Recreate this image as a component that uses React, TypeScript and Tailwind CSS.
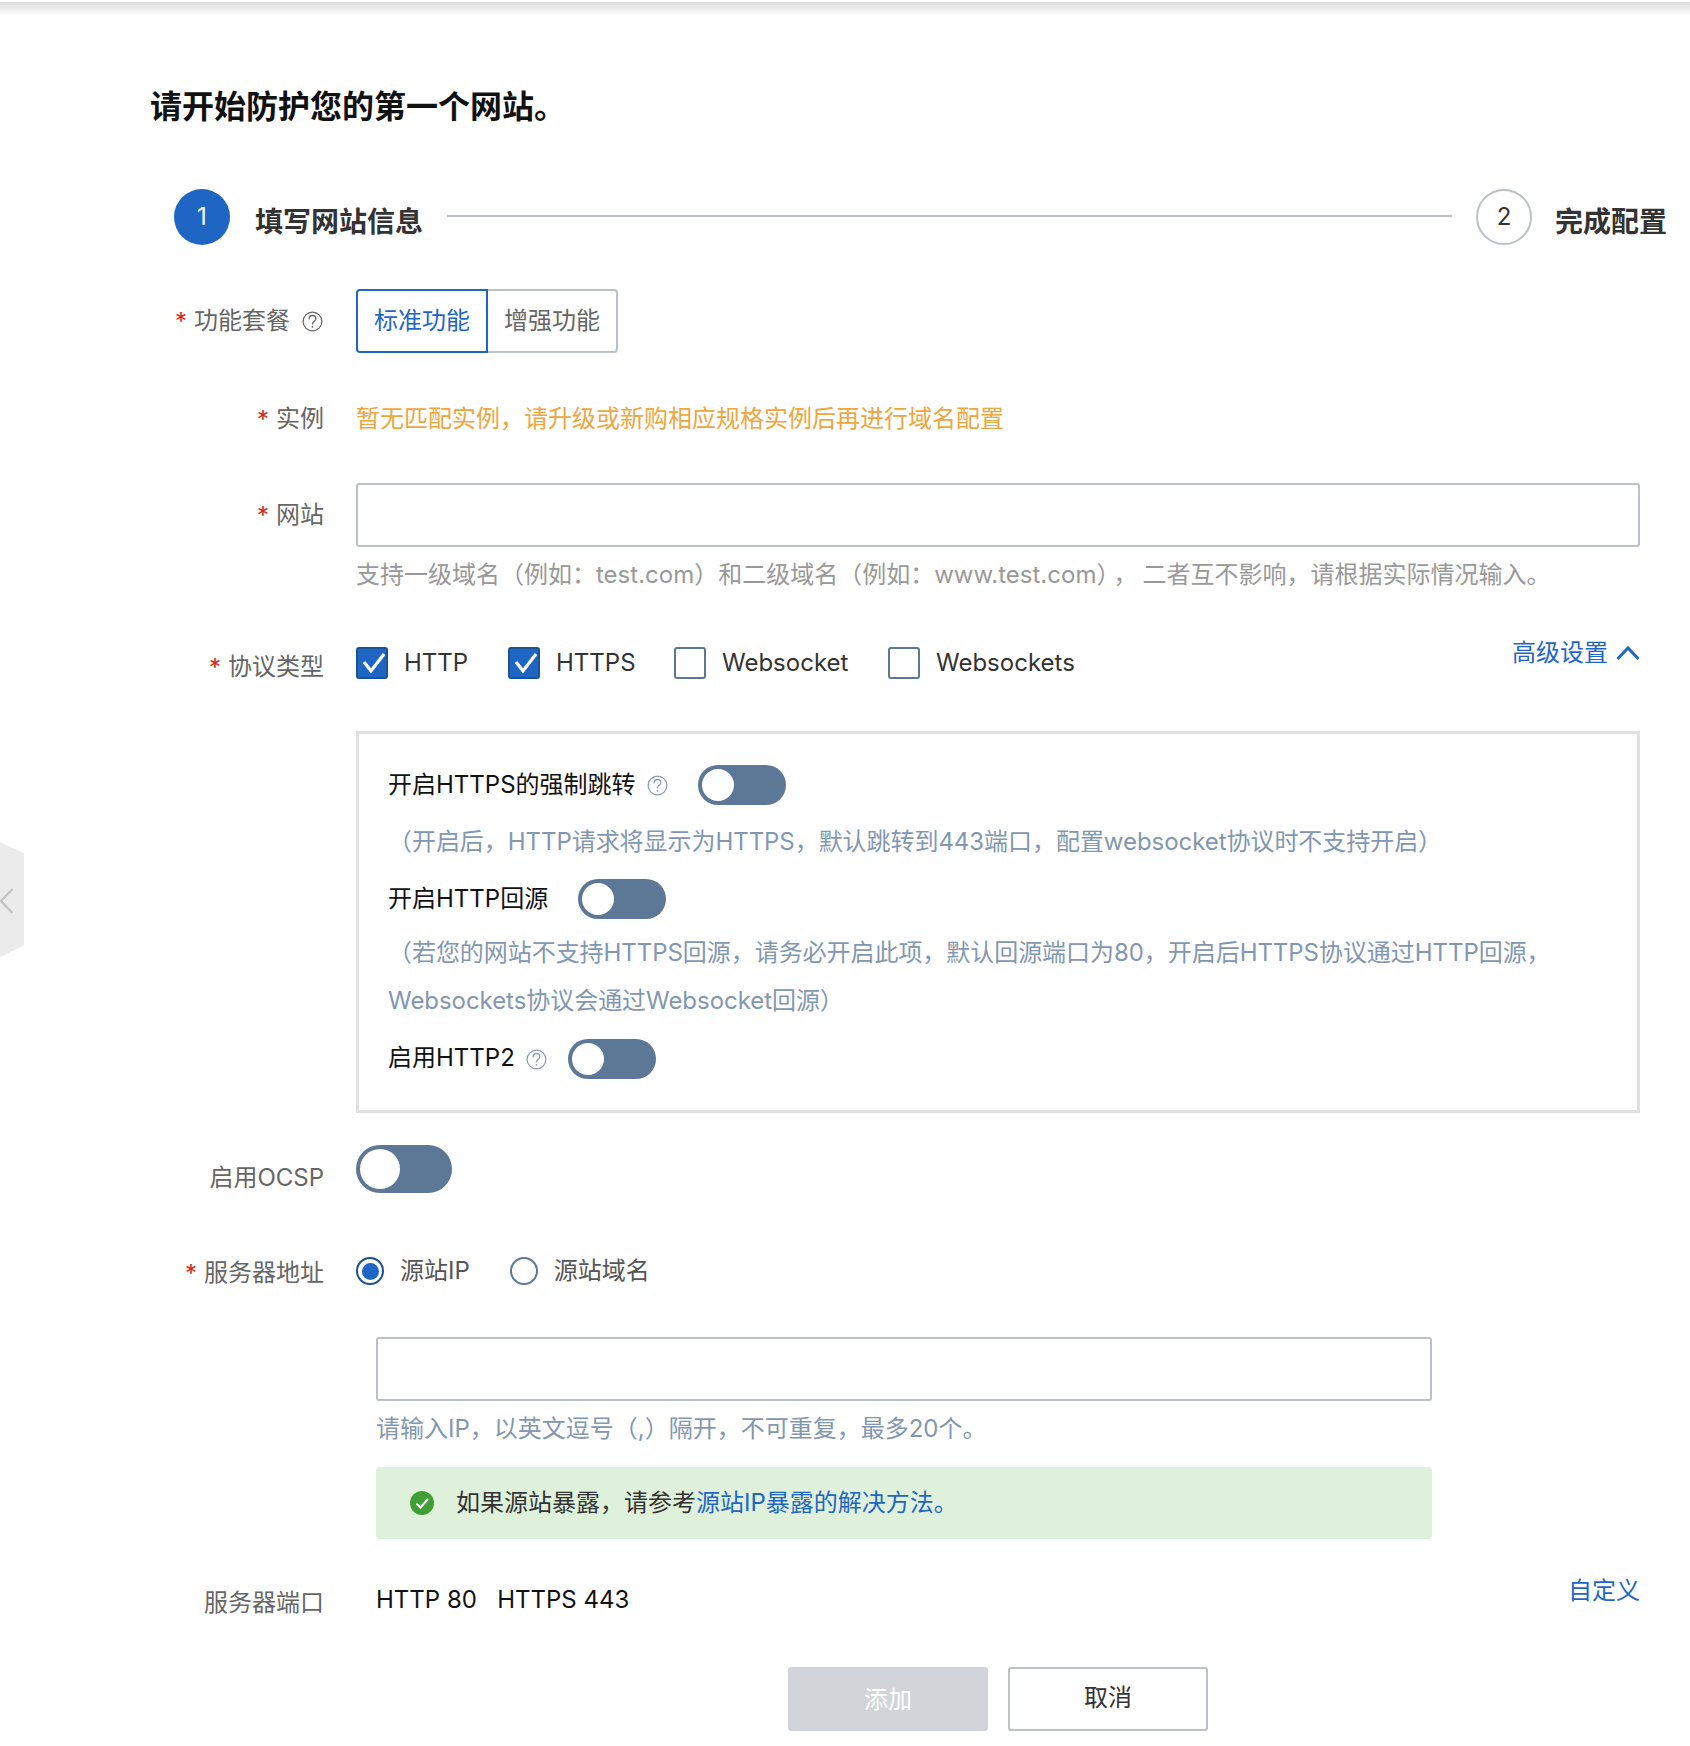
import React from "react";

const FONT = "font-['Inter','Noto_Sans_CJK_SC',sans-serif]";

function Help({ className }: { className: string }) {
  return (
    <svg className={className} viewBox="0 0 22 22" fill="none">
      <circle cx="11" cy="11" r="9.8" stroke="currentColor" strokeWidth="1.3" />
      <path d="M7.5 8.2c0-2 1.5-3.5 3.5-3.5s3.5 1.4 3.5 3.3c0 2.7-3.5 2.6-3.5 5.4" stroke="currentColor" strokeWidth="1.4" strokeLinecap="round" />
      <circle cx="11" cy="16.6" r="1" fill="currentColor" />
    </svg>
  );
}

function Toggle({ big }: { big?: boolean }) {
  return big ? (
    <div className="flex h-[48px] w-[96px] items-center rounded-full bg-[#5d7896] pl-[4px]">
      <div className="h-[40px] w-[40px] rounded-full bg-white" />
    </div>
  ) : (
    <div className="flex h-[40px] w-[88px] shrink-0 items-center rounded-full bg-[#5d7896] pl-[4px]">
      <div className="h-[32px] w-[32px] rounded-full bg-white" />
    </div>
  );
}

function Label({ text, req, help, className = "" }: { text: string; req?: boolean; help?: boolean; className?: string }) {
  return (
    <div className={`flex w-[324px] shrink-0 items-center justify-end text-[24px] leading-[32px] text-[#666666] ${className}`}>
      {req && <span className="mr-[7px] mt-[2px] text-[#d0281c]">*</span>}
      <span>{text}</span>
      {help && <Help className="ml-[12px] mr-[1px] h-[21px] w-[21px] text-[#666666]" />}
    </div>
  );
}

function Check({ label, on, w }: { label: string; on?: boolean; w: string }) {
  return (
    <div className={`flex items-center ${w}`}>
      {on ? (
        <div className="flex h-[32px] w-[32px] items-center justify-center rounded-[3px] border-2 border-[#1a5296] bg-[#1f66c4]">
          <svg viewBox="0 0 28 28" className="h-[28px] w-[28px]" fill="none">
            <path d="M6 13l7 9L26 5" stroke="white" strokeWidth="3.2" />
          </svg>
        </div>
      ) : (
        <div className="h-[32px] w-[32px] rounded-[3px] border-2 border-[#5d7896] bg-white" />
      )}
      <span className="ml-[16px] text-[24px] leading-[32px] text-[#333333]">{label}</span>
    </div>
  );
}

export default function App() {
  return (
    <div className={`relative h-[1746px] w-full overflow-hidden bg-white ${FONT}`}>
      <div className="mt-[2px] h-[14px] bg-gradient-to-b from-[#dcdcdc] to-white" />
      <div className="absolute left-0 top-[842px] h-[115px] w-[24px] bg-[#ebebeb] [clip-path:polygon(0_0,100%_10%,100%_90%,0_100%)]">
        <svg viewBox="0 0 14 26" className="mt-[46px] h-[26px] w-[14px]" fill="none">
          <path d="M12.5 1L1 13l11.5 12" stroke="#c4c4c4" strokeWidth="2.4" />
        </svg>
      </div>

      <h1 className="ml-[150px] mt-[69px] text-[32px] font-semibold leading-[44px] text-[#111111]">请开始防护您的第一个网站。</h1>

      <div className="ml-[174px] mr-[23px] mt-[60px] flex h-[56px] items-center">
        <div className="flex h-[56px] w-[56px] items-center justify-center rounded-full bg-[#1f66c4] text-[24px] text-white">1</div>
        <span className="ml-[25px] mt-[10px] text-[28px] font-semibold leading-[40px] text-[#333333]">填写网站信息</span>
        <div className="mx-[24px] mb-[2px] h-[2px] flex-1 bg-[#bcc1c8]" />
        <div className="flex h-[56px] w-[56px] items-center justify-center rounded-full border-2 border-[#bcc1c8] text-[24px] text-[#333333]">2</div>
        <span className="ml-[23px] mt-[10px] text-[28px] font-semibold leading-[40px] text-[#333333]">完成配置</span>
      </div>

      <div className="mt-[44px] flex h-[64px] items-center">
        <Label text="功能套餐" req help />
        <div className="ml-[32px] flex h-[64px]">
          <div className="flex w-[132px] items-center justify-center rounded-l-[4px] border-2 border-[#1f66c4] text-[24px] text-[#1f66c4]">标准功能</div>
          <div className="flex w-[130px] items-center justify-center rounded-r-[4px] border-2 border-l-0 border-[#bcc1c8] text-[24px] text-[#666666]">增强功能</div>
        </div>
      </div>

      <div className="mt-[50px] flex h-[32px] items-center">
        <Label text="实例" req />
        <span className="ml-[32px] text-[24px] leading-[32px] text-[#eea63e]">暂无匹配实例，请升级或新购相应规格实例后再进行域名配置</span>
      </div>

      <div className="mt-[48px] flex h-[64px] items-center">
        <Label text="网站" req />
        <div className="ml-[32px] h-[64px] w-[1284px] rounded-[3px] border-2 border-[#bcc1c8]" />
      </div>
      <div className="ml-[356px] mt-[12px] whitespace-pre text-[24px] leading-[32px] text-[#999999]">支持一级域名（例如：test.com）和二级域名（例如：www.test.com）<span className="ml-[5px] mr-[5px]">，</span>二者互不影响，请根据实际情况输入。</div>

      <div className="mr-[50px] mt-[45px] flex h-[48px] items-start">
        <Label text="协议类型" req className="mt-[14px]" />
        <div className="ml-[32px] mt-[11px] flex">
          <Check label="HTTP" on w="w-[152px]" />
          <Check label="HTTPS" on w="w-[166px]" />
          <Check label="Websocket" w="w-[214px]" />
          <Check label="Websockets" w="w-[220px]" />
        </div>
        <div className="ml-auto mt-[1px] flex items-center text-[24px] leading-[32px] text-[#1f66c4]">
          高级设置
          <svg viewBox="0 0 24 14" className="ml-[8px] h-[14px] w-[24px]" fill="none">
            <path d="M1.5 13L12 2l10.5 11" stroke="#1f66c4" strokeWidth="3" />
          </svg>
        </div>
      </div>

      <div className="ml-[356px] mt-[47px] flex h-[382px] w-[1284px] flex-col border-[3px] border-[#e0e0e0] pl-[29px] pt-[31px] text-[24px] leading-[32px]">
        <div className="flex h-[40px] items-center text-[#111111]">
          开启HTTPS的强制跳转
          <Help className="ml-[11px] h-[21px] w-[21px] text-[#8a9db5]" />
          <div className="ml-[30px]"><Toggle /></div>
        </div>
        <div className="mt-[21px] tracking-[-0.05px] text-[#8297b0]">（开启后，HTTP请求将显示为HTTPS，默认跳转到443端口，配置websocket协议时不支持开启）</div>
        <div className="mt-[21px] flex h-[40px] items-center text-[#111111]">
          开启HTTP回源
          <div className="ml-[30px]"><Toggle /></div>
        </div>
        <div className="mt-[10px] pr-[60px] leading-[48px] tracking-[-0.05px] text-[#8297b0]">（若您的网站不支持HTTPS回源，请务必开启此项，默认回源端口为80，开启后HTTPS协议通过HTTP回源，Websockets协议会通过Websocket回源）</div>
        <div className="mt-[14px] flex h-[40px] items-center text-[#111111]">
          <span className="mb-[2px]">启用HTTP2</span>
          <Help className="ml-[11px] h-[21px] w-[21px] text-[#8a9db5]" />
          <div className="ml-[21px]"><Toggle /></div>
        </div>
      </div>

      <div className="mt-[32px] flex h-[48px] items-start">
        <Label text="启用OCSP" className="mt-[17px]" />
        <div className="ml-[32px]"><Toggle big /></div>
      </div>

      <div className="mt-[62px] flex h-[32px] items-center">
        <Label text="服务器地址" req className="mt-[4px]" />
        <div className="ml-[32px] flex items-center text-[24px] leading-[32px] text-[#555555]">
          <div className="flex h-[28px] w-[28px] items-center justify-center rounded-full border-2 border-[#1a5296]">
            <div className="h-[17px] w-[17px] rounded-full bg-[#1f66c4]" />
          </div>
          <span className="ml-[16px]">源站IP</span>
          <div className="ml-[40px] h-[28px] w-[28px] rounded-full border-2 border-[#5d7896]" />
          <span className="ml-[16px]">源站域名</span>
        </div>
      </div>

      <div className="ml-[376px] mt-[50px] h-[64px] w-[1056px] rounded-[3px] border-2 border-[#bcc1c8]" />
      <div className="ml-[376px] mt-[12px] text-[24px] leading-[32px] text-[#8297b0]">请输入IP，以英文逗号（,）隔开，不可重复，最多20个。</div>
      <div className="ml-[376px] mt-[22px] flex h-[72px] w-[1056px] items-center rounded-[3px] bg-[#dff1da] pl-[34px] text-[24px] text-[#333333]">
        <svg viewBox="0 0 24 24" className="h-[24px] w-[24px]" fill="none">
          <circle cx="12" cy="12" r="12" fill="#3f9f35" />
          <path d="M6.5 12.5l4 4 7.5-8.5" stroke="white" strokeWidth="2" />
        </svg>
        <span className="ml-[22px]">如果源站暴露，请参考<span className="text-[#1f66c4]">源站IP暴露的解决方法。</span></span>
      </div>

      <div className="mr-[50px] mt-[38px] flex h-[40px] items-start">
        <Label text="服务器端口" className="mt-[10px]" />
        <span className="ml-[52px] mt-[7px] whitespace-pre text-[24px] leading-[32px] text-[#111111]">HTTP 80   HTTPS 443</span>
        <span className="ml-auto mt-[-2px] text-[24px] leading-[32px] text-[#1f66c4]">自定义</span>
      </div>

      <div className="ml-[788px] mt-[50px] flex gap-[20px] text-[24px]">
        <div className="flex h-[64px] w-[200px] items-center justify-center rounded-[3px] bg-[#d1d4d9] pt-[2px] text-white">添加</div>
        <div className="flex h-[64px] w-[200px] items-center justify-center rounded-[3px] border-2 border-[#bcc1c8] pb-[2px] text-[#333333]">取消</div>
      </div>
    </div>
  );
}
